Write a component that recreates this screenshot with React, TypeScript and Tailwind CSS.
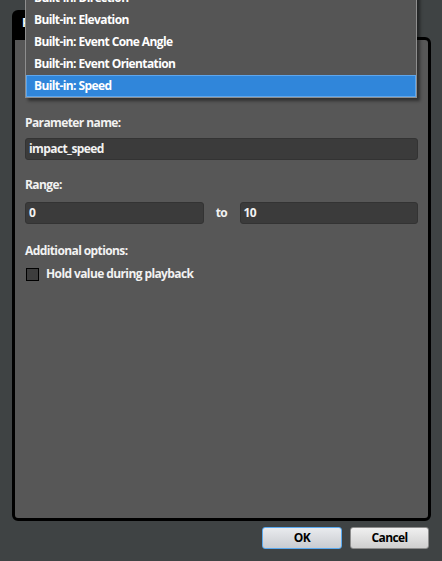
import React from "react";

const items = [
  "Built-in: Direction",
  "Built-in: Elevation",
  "Built-in: Event Cone Angle",
  "Built-in: Event Orientation",
  "Built-in: Speed",
];

function Field({ value, className = "" }: { value: string; className?: string }) {
  return (
    <div
      className={`h-[22px] flex items-center px-[3px] rounded-[3px] bg-[#3b3b3b] border border-[#333333] text-[#f2f2f2] ${className}`}
    >
      {value}
    </div>
  );
}

export default function App() {
  return (
    <div
      className="relative w-[442px] h-[561px] overflow-hidden bg-[#3f4344] text-[12px] font-bold tracking-[-0.6px]"
      style={{ fontFamily: '"Open Sans", "Noto Sans", sans-serif' }}
    >
      <div className="flex flex-col pl-[12px] pr-[11px] pt-[10px]">
        {/* tab */}
        <div className="w-[160px] h-[27px] bg-black rounded-t-[6px] pl-[10px] pt-[4px] text-white">
          Parameter
        </div>

        {/* panel */}
        <div className="h-[484px] bg-[#575757] border-[3px] border-black rounded-b-[6px] rounded-tr-[6px] px-[10px] pt-[74px] text-[#f2f2f2]">
          <div className="mb-[7px] leading-[17px]">Parameter name:</div>
          <Field value="impact_speed" />

          <div className="mt-[16px] mb-[9px] leading-[17px]">Range:</div>
          <div className="flex items-center">
            <Field value="0" className="flex-1" />
            <span className="w-[36px] text-center">to</span>
            <Field value="10" className="flex-1" />
          </div>

          <div className="mt-[18px] mb-[6px] leading-[17px]">Additional options:</div>
          <div className="flex items-center gap-[7px]">
            <div className="ml-[1px] w-[13px] h-[13px] bg-[#3d3d3d] border border-black" />
            <span>Hold value during playback</span>
          </div>
        </div>

        {/* buttons */}
        <div className="flex justify-end gap-[8px] mt-[6px] pr-[2px]">
          <button className="w-[80px] h-[22px] rounded-[3px] border border-[#5aaaf0] bg-gradient-to-b from-[#e9ebee] to-[#c9ccd1] text-black">
            OK
          </button>
          <button className="w-[79px] h-[22px] rounded-[3px] border border-[#8c8c8c] bg-gradient-to-b from-[#f0f0f0] to-[#cfcfcf] text-black">
            Cancel
          </button>
        </div>
      </div>

      {/* dropdown popup */}
      <div className="absolute left-[25px] top-[-13px] w-[392px] bg-[#555555] border-x border-b border-[#8e8e8e] shadow-[3px_3px_3px_rgba(0,0,0,0.45)]">
        {items.map((it) => {
          const active = it === "Built-in: Speed";
          return (
            <div
              key={it}
              className={
                active
                  ? "h-[22px] flex items-center pl-[7px] text-white bg-[#3086da] border border-[#5ea6ec]"
                  : "h-[22px] flex items-center pl-[8px] text-white"
              }
            >
              {it}
            </div>
          );
        })}
      </div>
    </div>
  );
}
